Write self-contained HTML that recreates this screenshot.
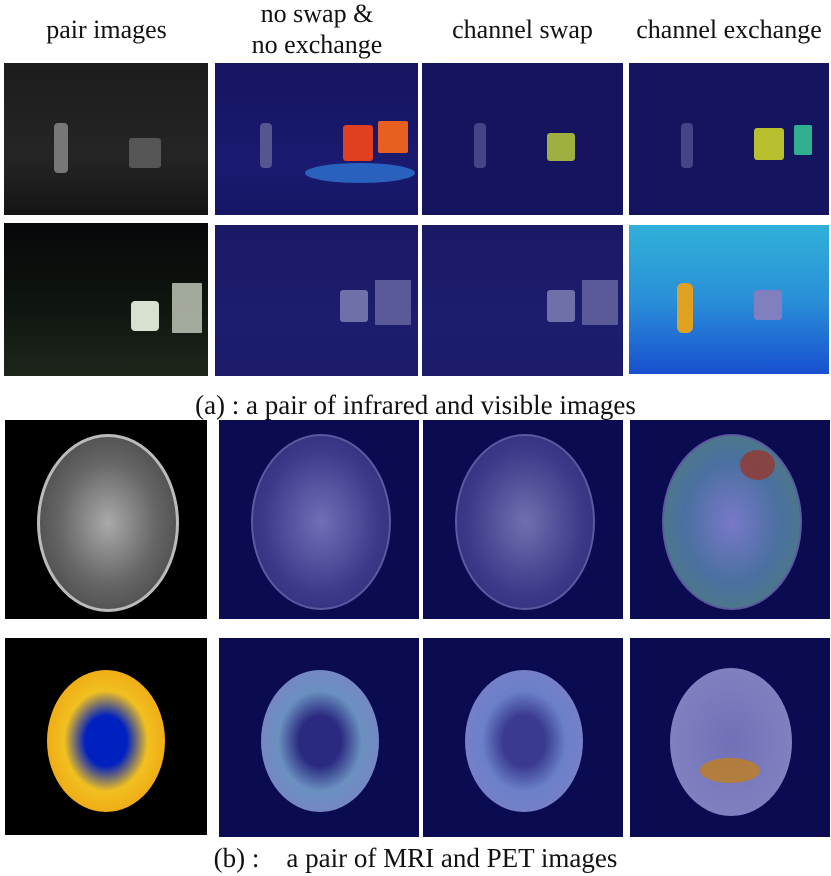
<!DOCTYPE html>
<html><head><meta charset="utf-8"><style>
body{margin:0;width:831px;height:876px;background:#fff;position:relative;overflow:hidden;font-family:"Liberation Serif",serif;color:#111}
.t{position:absolute;font-size:26px;text-align:center;white-space:nowrap;line-height:1}
.i{position:absolute;overflow:hidden}
.e{position:absolute;border-radius:50%}
</style></head><body>
<div class="t" style="left:5px;width:203px;top:17px">pair images</div>
<div class="t" style="left:216px;width:202px;top:1px">no swap &amp;</div>
<div class="t" style="left:216px;width:202px;top:32px">no exchange</div>
<div class="t" style="left:422px;width:201px;top:17px">channel swap</div>
<div class="t" style="left:629px;width:200px;top:17px">channel exchange</div>

<!-- row1 -->
<div class="i" style="left:4px;top:63px;width:204px;height:152px;background:linear-gradient(#1c1c1c,#252525 60%,#151515)">
 <div class="e" style="left:50px;top:60px;width:14px;height:50px;border-radius:4px;background:#777"></div>
 <div class="e" style="left:125px;top:75px;width:32px;height:30px;border-radius:3px;background:#555"></div></div>
<div class="i" style="left:215px;top:63px;width:203px;height:152px;background:linear-gradient(#151560,#1a1a70 65%,#161665)">
 <div class="e" style="left:128px;top:62px;width:30px;height:36px;border-radius:3px;background:#e04020"></div>
 <div class="e" style="left:163px;top:58px;width:30px;height:32px;border-radius:2px;background:#e86020"></div>
 <div class="e" style="left:90px;top:100px;width:110px;height:20px;background:#3080e0;opacity:.7"></div>
 <div class="e" style="left:45px;top:60px;width:12px;height:45px;border-radius:4px;background:#555590"></div></div>
<div class="i" style="left:422px;top:63px;width:201px;height:152px;background:#15155f">
 <div class="e" style="left:125px;top:70px;width:28px;height:28px;border-radius:3px;background:#a0b040"></div>
 <div class="e" style="left:52px;top:60px;width:12px;height:45px;border-radius:4px;background:#444488"></div></div>
<div class="i" style="left:629px;top:63px;width:200px;height:152px;background:#15155f">
 <div class="e" style="left:125px;top:65px;width:30px;height:32px;border-radius:3px;background:#b8c030"></div>
 <div class="e" style="left:165px;top:62px;width:18px;height:30px;border-radius:2px;background:#30b090"></div>
 <div class="e" style="left:52px;top:60px;width:12px;height:45px;border-radius:4px;background:#444488"></div></div>

<!-- row2 -->
<div class="i" style="left:4px;top:223px;width:204px;height:153px;background:linear-gradient(#06080a,#0e140e 50%,#1e261c)">
 <div class="e" style="left:127px;top:78px;width:28px;height:30px;border-radius:4px;background:#d8e0d0"></div>
 <div class="e" style="left:168px;top:60px;width:30px;height:50px;border-radius:1px;background:#c8d0c0;opacity:.8"></div></div>
<div class="i" style="left:215px;top:225px;width:203px;height:151px;background:linear-gradient(#191965,#1d1d6e 60%,#1c1c6a)">
 <div class="e" style="left:125px;top:65px;width:28px;height:32px;border-radius:3px;background:#7070a8"></div>
 <div class="e" style="left:160px;top:55px;width:36px;height:45px;border-radius:1px;background:#5a5a98"></div></div>
<div class="i" style="left:422px;top:225px;width:201px;height:151px;background:linear-gradient(#191965,#1d1d6e 60%,#1c1c6a)">
 <div class="e" style="left:125px;top:65px;width:28px;height:32px;border-radius:3px;background:#7070a8"></div>
 <div class="e" style="left:160px;top:55px;width:36px;height:45px;border-radius:1px;background:#5a5a98"></div></div>
<div class="i" style="left:629px;top:225px;width:200px;height:149px;background:linear-gradient(#30b0d8,#2a90d8 50%,#1850d0)">
 <div class="e" style="left:48px;top:58px;width:16px;height:50px;border-radius:6px;background:#e0a020"></div>
 <div class="e" style="left:125px;top:65px;width:28px;height:30px;border-radius:3px;background:#8080c0"></div></div>

<div class="t" style="left:0;width:831px;top:392px;font-size:27px">(a) : a pair of infrared and visible images</div>

<!-- row3 MRI -->
<div class="i" style="left:5px;top:420px;width:202px;height:199px;background:#000">
 <div class="e" style="left:32px;top:14px;width:136px;height:172px;background:radial-gradient(#aaa,#666 50%,#444 90%);border:3px solid #bbb"></div></div>
<div class="i" style="left:219px;top:420px;width:200px;height:199px;background:#0b0b52">
 <div class="e" style="left:32px;top:14px;width:136px;height:172px;background:radial-gradient(#7070b8,#3a3a88 60%,#2a2a78);border:2px solid #5a5aa0"></div></div>
<div class="i" style="left:423px;top:420px;width:200px;height:199px;background:#0b0b52">
 <div class="e" style="left:32px;top:14px;width:136px;height:172px;background:radial-gradient(#7070b0,#3a3a88 60%,#2a2a78);border:2px solid #5a5aa0"></div></div>
<div class="i" style="left:630px;top:420px;width:200px;height:199px;background:#0b0b52">
 <div class="e" style="left:32px;top:14px;width:136px;height:172px;background:radial-gradient(#7878c8,#4a70a0 50%,#508070);border:2px solid #5a5aa0"></div>
 <div class="e" style="left:110px;top:30px;width:35px;height:30px;background:#a03020;opacity:.7"></div></div>

<!-- row4 PET -->
<div class="i" style="left:5px;top:638px;width:202px;height:197px;background:#000">
 <div class="e" style="left:42px;top:32px;width:118px;height:142px;background:radial-gradient(#0020c0 25%,#f0c020 50%,#f0a010 85%,#102090 100%)"></div></div>
<div class="i" style="left:219px;top:638px;width:200px;height:199px;background:#0b0b52">
 <div class="e" style="left:42px;top:32px;width:118px;height:142px;background:radial-gradient(#2a2a80 25%,#6a90c0 50%,#8080c8 90%)"></div></div>
<div class="i" style="left:423px;top:638px;width:200px;height:199px;background:#0b0b52">
 <div class="e" style="left:42px;top:32px;width:118px;height:142px;background:radial-gradient(#3a3a90 25%,#6a80c8 50%,#8080c8 90%)"></div></div>
<div class="i" style="left:630px;top:638px;width:200px;height:199px;background:#0b0b52">
 <div class="e" style="left:40px;top:30px;width:122px;height:148px;background:radial-gradient(#7070b8,#8080c0 70%,#6a6ab0)"></div>
 <div class="e" style="left:70px;top:120px;width:60px;height:25px;background:#c08020;opacity:.8"></div></div>

<div class="t" style="left:0;width:831px;top:845px;font-size:27px">(b) :&nbsp;&nbsp;&nbsp; a pair of MRI and PET images</div>
</body></html>
